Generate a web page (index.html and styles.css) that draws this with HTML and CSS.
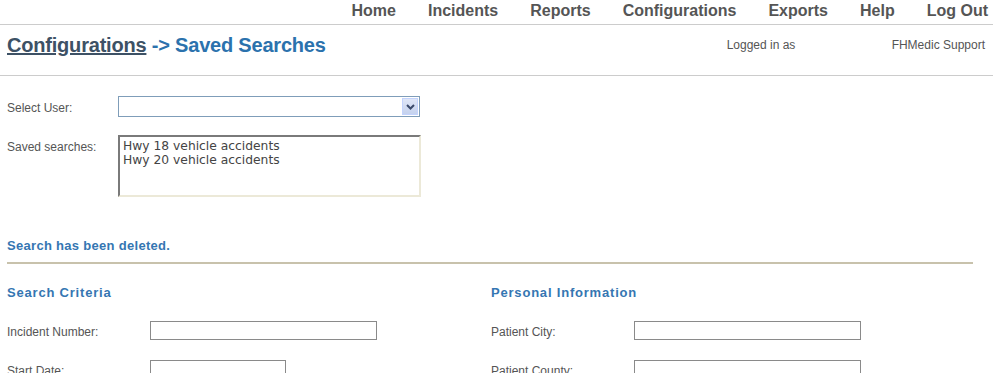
FILE: index.html
```html
<!DOCTYPE html>
<html>
<head>
  <title>Saved Searches - FHMedic</title>
  <meta charset="UTF-8" />
  <link rel="stylesheet" href="styles.css">
</head>
<body>
  <div class="navbar">
    <ul class="nav-links">
      <li><a href="#">Home</a></li>
      <li><a href="#">Incidents</a></li>
      <li><a href="#">Reports</a></li>
      <li><a href="#">Configurations</a></li>
      <li><a href="#">Exports</a></li>
      <li><a href="#">Help</a></li>
      <li><a href="#">Log Out</a></li>
    </ul>
  </div>

  <div class="title-bar">
    <h1><a href="#">Configurations</a> <span>-&gt; Saved Searches</span></h1>
    <div class="login-info">
      <span class="login-label">Logged in as</span>
      <span class="login-name">FHMedic Support</span>
    </div>
  </div>

  <div class="user-form">
    <div class="form-row">
      <label>Select User:</label>
      <div class="select-box">
        <span class="select-arrow">
          <svg width="9" height="6" viewBox="0 0 9 6"><path d="M1 1 L4.5 4.5 L8 1" fill="none" stroke="#3b4a6b" stroke-width="2"/></svg>
        </span>
      </div>
    </div>
    <div class="form-row">
      <label>Saved searches:</label>
      <div class="list-box">
        <div>Hwy 18 vehicle accidents</div>
        <div>Hwy 20 vehicle accidents</div>
      </div>
    </div>
  </div>

  <p class="message">Search has been deleted.</p>

  <div class="criteria">
    <div class="column">
      <h2>Search Criteria</h2>
      <div class="field">
        <label>Incident Number:</label>
        <input type="text" class="wide" />
      </div>
      <div class="field">
        <label>Start Date:</label>
        <input type="text" class="short" />
      </div>
    </div>
    <div class="column">
      <h2>Personal Information</h2>
      <div class="field">
        <label>Patient City:</label>
        <input type="text" class="wide" />
      </div>
      <div class="field">
        <label>Patient County:</label>
        <input type="text" class="wide" />
      </div>
    </div>
  </div>
</body>
</html>
```

FILE: styles.css
```css
body {
  margin: 0;
  padding: 0;
  font-family: "Liberation Sans", Arial, sans-serif;
  font-size: 12px;
  color: #555555;
  background-color: #ffffff;
}

.navbar {
  height: 24px;
  border-bottom: 1px solid #cccccc;
  display: flex;
  justify-content: flex-end;
  padding-right: 5px;
}

.nav-links {
  list-style: none;
  display: flex;
  gap: 32px;
  margin: 0;
  padding: 2px 0 0 0;
  font-size: 16px;
  font-weight: bold;
}

.nav-links li a {
  text-decoration: none;
  color: #555555;
}

.title-bar {
  height: 50px;
  border-bottom: 1px solid #cccccc;
  display: flex;
  justify-content: space-between;
  padding-left: 7px;
}

.title-bar h1 {
  margin: 9px 0 0 0;
  font-size: 20px;
  font-weight: bold;
  letter-spacing: -0.2px;
  color: #2b72ad;
}

.title-bar h1 a {
  color: #3d5165;
  text-decoration: underline;
}

.login-info {
  display: flex;
  padding-top: 13px;
  padding-right: 8px;
  color: #555555;
}

.login-label {
  width: 165px;
}

.user-form {
  padding: 20px 0 0 7px;
}

.form-row {
  display: flex;
  margin-bottom: 18px;
}

.form-row label {
  width: 111px;
  padding-top: 5px;
}

.select-box {
  width: 298px;
  height: 17px;
  border: 1px solid #7f9db9;
  display: flex;
  justify-content: flex-end;
  padding: 1px;
}

.select-arrow {
  width: 16px;
  height: 17px;
  background: linear-gradient(to bottom, #dfe6f7, #c5d2ee);
  border: 1px solid #c3d3fd;
  box-sizing: border-box;
  display: flex;
  align-items: center;
  justify-content: center;
}

.list-box {
  width: 296px;
  height: 56px;
  border-top: 2px solid #7a7a7a;
  border-left: 2px solid #7a7a7a;
  border-right: 2px solid #ece9d8;
  border-bottom: 2px solid #ece9d8;
  padding: 2px 0 0 3px;
  font-family: "DejaVu Sans", Verdana, sans-serif;
  font-size: 12.3px;
  line-height: 14px;
  color: #444444;
}

.message {
  margin: 41px 7px 0 7px;
  padding-bottom: 9px;
  border-bottom: 2px solid #c8c2ac;
  width: 966px;
  font-size: 13px;
  font-weight: bold;
  letter-spacing: 0.3px;
  color: #3576b2;
}

.criteria {
  display: flex;
  padding-left: 7px;
}

.column {
  width: 484px;
}

.column h2 {
  margin: 21px 0 21px 0;
  font-size: 13px;
  font-weight: bold;
  letter-spacing: 0.8px;
  color: #3576b2;
}

.field {
  display: flex;
  align-items: center;
  margin-bottom: 20px;
}

.field label {
  width: 143px;
  padding-top: 2px;
}

.field input {
  height: 19px;
  border: 1px solid #8a8a8a;
  padding: 0;
  margin: 0;
  box-sizing: border-box;
}

.field input.wide {
  width: 227px;
}

.field input.short {
  width: 136px;
}
```
